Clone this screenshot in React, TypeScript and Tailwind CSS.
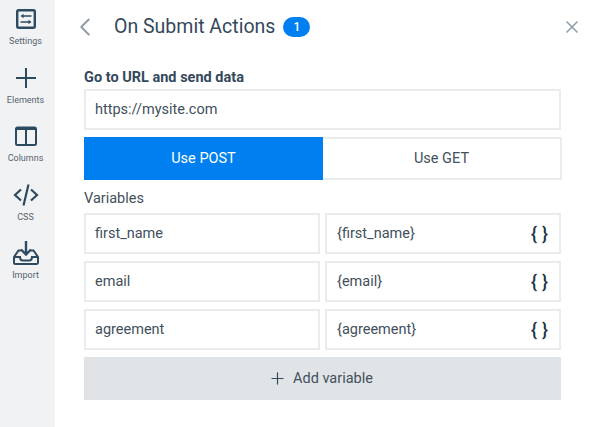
import { ChevronLeft, Plus, X } from "lucide-react";
import type { ReactNode } from "react";

const font = "font-['Roboto','Liberation_Sans',sans-serif]";

function SideItem({ icon, label }: { icon: ReactNode; label: string }) {
  return (
    <div className="flex h-[58.5px] w-[51px] flex-col items-center">
      <div className="flex h-[28px] w-full items-center justify-center text-[#2c4a60]">{icon}</div>
      <div className="mt-[2px] text-[9px] leading-[12px] text-[#55636f]">{label}</div>
    </div>
  );
}

function Field({ children, className = "" }: { children: ReactNode; className?: string }) {
  return (
    <div className={`flex h-[41px] items-center border-2 border-[#e9ebec] bg-white pl-[9px] pr-[9px] text-[14.5px] text-[#42505c] ${className}`}>
      {children}
    </div>
  );
}

const variables = ["first_name", "email", "agreement"];

export default function App() {
  return (
    <div className={`${font} flex h-[427px] w-[600px] overflow-hidden bg-white`}>
      <aside className="w-[55px] shrink-0 bg-[#f1f2f4] pt-[5px]">
        <SideItem
          label="Settings"
          icon={
            <svg width="20" height="20" viewBox="0 0 20 20" fill="none" stroke="currentColor">
              <rect x="1.2" y="1.2" width="17.6" height="17.600" rx="1.5" strokeWidth="2.400" />
              <path d="M7 7h8.500M4.500 13h8.500" strokeWidth="1.400" />
              <path d="M7.500 4.800v4.400L4.500 7zM12.500 10.800v4.400l3-2.200z" fill="currentColor" stroke="none" />
            </svg>
          }
        />
        <SideItem
          label="Elements"
          icon={
            <svg width="20" height="20" viewBox="0 0 20 20" fill="none" stroke="currentColor" strokeWidth="2">
              <path d="M10 0v20M0 10h20" />
            </svg>
          }
        />
        <SideItem
          label="Columns"
          icon={
            <svg width="22" height="20" viewBox="0 0 22 20" fill="none" stroke="currentColor">
              <rect x="1" y="1.500" width="20" height="17.500" rx="1.500" strokeWidth="2" />
              <path d="M1 2.500h20" strokeWidth="3" />
              <path d="M11 2v17" strokeWidth="2" />
            </svg>
          }
        />
        <SideItem
          label="CSS"
          icon={
            <svg width="26" height="24" viewBox="0 0 26 24" fill="none" stroke="currentColor" strokeWidth="2.200">
              <path d="M8 6.500l-6 5.500 6 5.500M18 6.500l6 5.500-6 5.500M15.500 1.500l-5 21" />
            </svg>
          }
        />
        <SideItem
          label="Import"
          icon={
            <svg width="26" height="24" viewBox="0 0 26 24" fill="none" stroke="currentColor" strokeWidth="2">
              <path d="M13 0v13M8 8.500l5 5 5-5" strokeWidth="2.400" />
              <path d="M8 9.500H5.500L1 16v5.500a1.500 1.500 0 0 0 1.500 1.500h21a1.500 1.500 0 0 0 1.500-1.500V16l-4.500-6.500H18" />
              <path d="M1 16h6c0 2.500 1.500 3.500 3 3.500h6c1.500 0 3-1 3-3.500h6" />
            </svg>
          }
        />
      </aside>

      <main className="min-w-0 flex-1 pl-[29px] pr-[39px]">
        <header className="flex h-[54px] items-center">
          <ChevronLeft size={30} strokeWidth={1.5} className="ml-[-14px] text-[#8f9ba5]" />
          <h1 className="ml-[14px] text-[19.5px] font-normal text-[#34495c]">On Submit Actions</h1>
          <span className="ml-[8px] flex h-[20px] w-[27px] items-center justify-center rounded-full bg-[#0080f0] text-[12px] font-medium text-white">
            1
          </span>
          <X size={20} strokeWidth={2} className="ml-auto mr-[-21px] text-[#8fa0ae]" />
        </header>

        <div className="mt-[16px] text-[14.5px] font-bold leading-[16px] text-[#34495c]">Go to URL and send data</div>
        <Field className="mt-[3px]">https://mysite.com</Field>

        <div className="mt-[7px] flex h-[43px] w-[478px] text-[14.5px]">
          <button className="w-[239px] bg-[#0080f0] text-white">Use POST</button>
          <button className="w-[239px] border-2 border-l-0 border-[#e9ebec] text-[#42505c]">Use GET</button>
        </div>

        <div className="mt-[11px] text-[14.5px] leading-[16px] text-[#42505c]">Variables</div>

        <div className="mt-[6px] flex flex-col gap-[7px]">
          {variables.map((name) => (
            <div key={name} className="grid grid-cols-2 gap-[5px]">
              <Field>{name}</Field>
              <Field className="justify-between pl-[10px]">
                <span>{`{${name}}`}</span>
                <span className="mr-[-3px] text-[18px] font-medium tracking-[5px] text-[#1c3346]">{"{}"}</span>
              </Field>
            </div>
          ))}
        </div>

        <button className="mt-[7px] flex h-[43px] w-full items-center justify-center gap-[6px] bg-[#e1e4e7] pr-[4px] text-[14.5px] text-[#42505c]">
          <Plus size={19} strokeWidth={1.5} className="text-[#34495c]" />
          Add variable
        </button>
      </main>
    </div>
  );
}
